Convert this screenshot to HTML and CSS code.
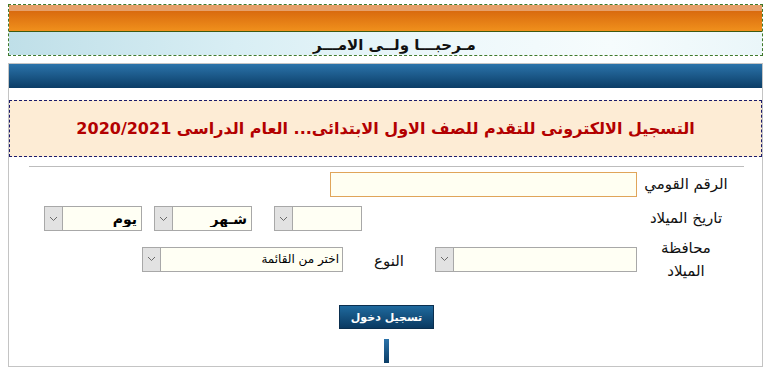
FILE: index.html
```html
<!DOCTYPE html>
<html dir="rtl" lang="ar">
	<head>
		<meta charset="utf-8">
		<title>التسجيل الالكترونى</title>
		<link rel="stylesheet" href="styles.css">
	</head>
	<body>
		<div id="welcome">
			<div id="welcome-bar"></div>
			<div id="welcome-text">مـرحبـــا ولــى الامـــر</div>
		</div>

		<div id="panel">
			<div id="panel-head"></div>

			<div id="notice">
				<h1>التسجيل الالكترونى للتقدم للصف الاول الابتدائى... العام الدراسى 2020/2021</h1>
			</div>

			<div class="rule"></div>

			<form id="form">
				<div class="row row-id">
					<label class="label" for="nid">الرقم القومي</label>
					<input class="field" id="nid" type="text">
				</div>

				<div class="row row-date">
					<label class="label">تاريخ الميلاد</label>
					<div class="combo combo-year">
						<select><option></option></select>
						<span class="arrow"><svg width="9" height="6" viewBox="0 0 9 6"><path d="M1 1 L4.5 4.5 L8 1" fill="none" stroke="#6a6a6a" stroke-width="1"/></svg></span>
					</div>
					<div class="combo combo-month">
						<select class="bold"><option>شـهر</option></select>
						<span class="arrow"><svg width="9" height="6" viewBox="0 0 9 6"><path d="M1 1 L4.5 4.5 L8 1" fill="none" stroke="#6a6a6a" stroke-width="1"/></svg></span>
					</div>
					<div class="combo combo-day">
						<select class="bold"><option>يوم</option></select>
						<span class="arrow"><svg width="9" height="6" viewBox="0 0 9 6"><path d="M1 1 L4.5 4.5 L8 1" fill="none" stroke="#6a6a6a" stroke-width="1"/></svg></span>
					</div>
				</div>

				<div class="row row-place">
					<label class="label">محافظة<br>الميلاد</label>
					<div class="combo combo-gov">
						<select><option></option></select>
						<span class="arrow"><svg width="9" height="6" viewBox="0 0 9 6"><path d="M1 1 L4.5 4.5 L8 1" fill="none" stroke="#6a6a6a" stroke-width="1"/></svg></span>
					</div>
					<label class="label-small">النوع</label>
					<div class="combo combo-gender">
						<select class="small"><option>اختر من القائمة</option></select>
						<span class="arrow"><svg width="9" height="6" viewBox="0 0 9 6"><path d="M1 1 L4.5 4.5 L8 1" fill="none" stroke="#6a6a6a" stroke-width="1"/></svg></span>
					</div>
				</div>

				<div class="actions">
					<button type="button" id="login">تسجيل دخول</button>
				</div>
				<div class="actions">
					<span id="stem"></span>
				</div>
			</form>
		</div>
	</body>
</html>
```

FILE: styles.css
```css
body
{
	margin: 4px 8px 0;
	background-color: #ffffff;
	font-family: "DejaVu Sans", sans-serif;
}

#welcome
{
	border: 1px dashed #3f7a2c;
}

#welcome-bar
{
	height: 20px;
	border-top: 6px solid #e6a06a;
	border-bottom: 1px solid #3d5a12;
	background: linear-gradient(#d96a0e, #f0901c);
}

#welcome-text
{
	height: 23px;
	line-height: 26px;
	padding-left: 18px;
	text-align: center;
	font-size: 15px;
	font-weight: bold;
	color: #111111;
	background: linear-gradient(90deg, #bfdfe8, #d8eef4 30%, #eef8fb 60%, #f6fcfd 80%, #eaf6f9);
}

#panel
{
	margin-top: 7px;
	height: 302px;
	border: 1px solid #c4c4c4;
}

#panel-head
{
	height: 24px;
	background: linear-gradient(#2b73aa, #0b3d66);
}

#notice
{
	margin-top: 12px;
	height: 55px;
	border: 1px dashed #1b1b6b;
	background-color: #fdecd5;
	display: flex;
	align-items: center;
	justify-content: center;
}

#notice h1
{
	margin: 0;
	font-size: 16px;
	font-weight: bold;
	color: #b30000;
}

.rule
{
	margin: 9px 18px 0 20px;
	border-top: 1px solid #bdbdbd;
}

#form
{
	padding: 5px 27px 0 0;
}

.row
{
	display: flex;
	align-items: center;
}

.label
{
	width: 98px;
	text-align: center;
	font-size: 15px;
	line-height: 23px;
	color: #111111;
}

.field
{
	box-sizing: border-box;
	width: 307px;
	height: 25px;
	margin: 0;
	border: 1px solid #e0a55a;
	background-color: #fffff2;
}

.row-date
{
	margin-top: 9px;
}

.row-place
{
	margin-top: 4px;
}

.row-place .label
{
	padding-top: 2px;
}

.combo
{
	box-sizing: border-box;
	position: relative;
	height: 25px;
	border: 1px solid #a8a8a8;
	background-color: #fffff4;
}

.combo select
{
	-webkit-appearance: none;
	appearance: none;
	box-sizing: border-box;
	width: 100%;
	height: 23px;
	margin: 0;
	padding: 0 4px 0 20px;
	border: 0;
	background: transparent;
	font-family: "DejaVu Sans", sans-serif;
	font-size: 13px;
	color: #000000;
}

.combo select.bold
{
	font-weight: bold;
	font-size: 14px;
}

.combo select.small
{
	font-size: 12px;
	padding-right: 3px;
}

.arrow
{
	position: absolute;
	left: 0;
	top: 0;
	width: 17px;
	height: 23px;
	border-right: 1px solid #a8a8a8;
	background-color: #e2e2e2;
	display: flex;
	align-items: center;
	justify-content: center;
}

.combo-year
{
	width: 88px;
	margin-right: 275px;
}

.combo-month
{
	width: 98px;
	margin-right: 22px;
}

.combo-day
{
	width: 98px;
	margin-right: 12px;
}

.combo-gov
{
	width: 202px;
}

.label-small
{
	width: 92px;
	text-align: center;
	font-size: 15px;
	color: #111111;
	padding-top: 4px;
}

.combo-gender
{
	width: 201px;
}

.actions
{
	display: flex;
	justify-content: center;
	padding-left: 29px;
}

#login
{
	margin-top: 22px;
	width: 95px;
	height: 24px;
	border: 1px solid #0b2f4f;
	background: linear-gradient(#1f6a9e, #0a3961);
	color: #ffffff;
	font-family: "DejaVu Sans", sans-serif;
	font-size: 11px;
	font-weight: bold;
}

#stem
{
	display: block;
	margin-top: 10px;
	width: 5px;
	height: 24px;
	background: linear-gradient(#2b73aa, #0b3d66);
}
```
